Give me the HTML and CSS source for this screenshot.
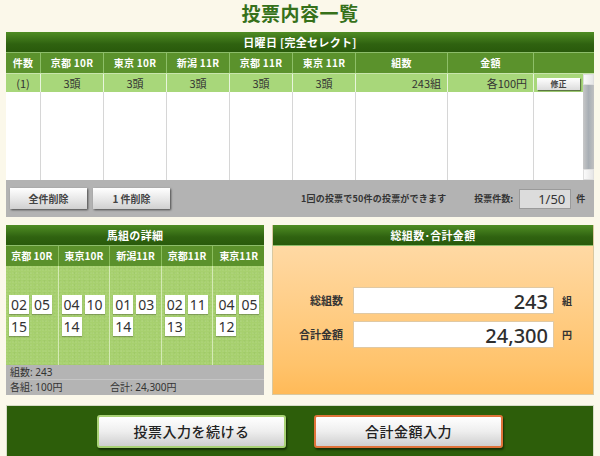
FILE: index.html
```html
<!DOCTYPE html>
<html lang="ja">
<head>
<meta charset="utf-8">
<title>投票内容一覧</title>
<link rel="stylesheet" href="styles.css">
</head>
<body>
<div class="page">
  <h1 class="title">投票内容一覧</h1>

  <section class="list-panel">
    <div class="bar-head">日曜日 [完全セレクト]</div>
    <div class="grid colhead">
      <div>件数</div><div>京都 10R</div><div>東京 10R</div><div>新潟 11R</div><div>京都 11R</div><div>東京 11R</div><div>組数</div><div>金額</div><div></div>
    </div>
    <div class="list-body">
      <div class="grid datarow">
        <div class="c">(1)</div><div class="c">3頭</div><div class="c">3頭</div><div class="c">3頭</div><div class="c">3頭</div><div class="c">3頭</div><div class="r">243組</div><div class="r">各100円</div><div class="l"><span class="btn-small">修正</span></div>
      </div>
      <div class="grid emptyrow">
        <div></div><div></div><div></div><div></div><div></div><div></div><div></div><div></div><div></div>
      </div>
      <div class="scrollbar"><div class="sb-end"></div><div class="sb-thumb"></div><div class="sb-end"></div></div>
    </div>
    <div class="toolbar">
      <span class="btn">全件削除</span>
      <span class="btn">1 件削除</span>
      <span class="note">1回の投票で50件の投票ができます</span>
      <span class="count-label">投票件数:</span>
      <span class="count-box">1/50</span>
      <span class="count-unit">件</span>
    </div>
  </section>

  <div class="row2">
    <section class="detail">
      <div class="bar-head">馬組の詳細</div>
      <div class="dgrid dhead">
        <div>京都 10R</div><div>東京10R</div><div>新潟11R</div><div>京都11R</div><div>東京11R</div>
      </div>
      <div class="dgrid turf">
        <div class="dcol"><span class="chip">02</span><span class="chip">05</span><span class="chip">15</span></div>
        <div class="dcol"><span class="chip">04</span><span class="chip">10</span><span class="chip">14</span></div>
        <div class="dcol"><span class="chip">01</span><span class="chip">03</span><span class="chip">14</span></div>
        <div class="dcol"><span class="chip">02</span><span class="chip">11</span><span class="chip">13</span></div>
        <div class="dcol"><span class="chip">04</span><span class="chip">05</span><span class="chip">12</span></div>
      </div>
      <div class="dsum">
        <div class="sline">組数: 243</div>
        <div class="sline"><span class="s1">各組: 100円</span><span>合計: 24,300円</span></div>
      </div>
    </section>

    <section class="total">
      <div class="bar-head">総組数･合計金額</div>
      <div class="total-body">
        <div class="trow"><span class="tlabel">総組数</span><span class="tbox">243</span><span class="tunit">組</span></div>
        <div class="trow"><span class="tlabel">合計金額</span><span class="tbox">24,300</span><span class="tunit">円</span></div>
      </div>
    </section>
  </div>

  <section class="actions">
    <span class="bigbtn green">投票入力を続ける</span>
    <span class="bigbtn orange">合計金額入力</span>
  </section>
</div>
</body>
</html>
```

FILE: styles.css
```css
* { box-sizing: border-box; margin: 0; padding: 0; }
html, body { background: #fbf8ea; }
body {
  font-family: "Noto Sans", "Noto Sans CJK JP", sans-serif;
  color: #333;
  overflow: hidden;
  width: 600px;
  height: 456px;
}
.page { padding: 0 6px; }

.title {
  height: 32px;
  line-height: 25px;
  text-align: center;
  font-family: "Noto Sans CJK JP", sans-serif;
  font-size: 19px;
  font-weight: 700;
  color: #36711a;
  letter-spacing: 0.5px;
}

.bar-head {
  height: 21px;
  line-height: 20px;
  text-align: center;
  color: #fff;
  font-family: "Noto Sans CJK JP", sans-serif;
  font-size: 11px;
  font-weight: 700;
  letter-spacing: 0.3px;
  background: linear-gradient(#4f8d24, #2f6210 60%, #295a0b);
  border-bottom: 1px solid #8dbd6a;
}

/* list panel */
.list-panel { background: #fff; }
.grid {
  display: grid;
  grid-template-columns: 34px 63px 63px 63px 63px 63px 92px 86px 61px;
}
.colhead {
  height: 21px;
  background: #5b922c;
  border-bottom: 1px solid #c8e5ac;
}
.colhead > div {
  color: #fff;
  font-family: "Noto Sans CJK JP", sans-serif;
  font-size: 10px;
  font-weight: 700;
  text-align: center;
  line-height: 20px;
  letter-spacing: 0.3px;
  border-left: 1px solid #8ebf68;
}
.colhead > div:first-child { border-left: none; }

.list-body { position: relative; }
.datarow {
  height: 18px;
  background: #a8d77a;
}
.datarow > div {
  font-family: "Noto Sans CJK JP", sans-serif;
  font-size: 11px;
  line-height: 18px;
  color: #333;
  border-left: 1px solid #e8f5dc;
  padding: 0 6px;
}
.datarow > div:first-child { border-left: none; }
.datarow .c { text-align: center; }
.datarow .r { text-align: right; }
.datarow .l { padding: 2px 0 0 3px; line-height: 12px; }
.btn-small {
  display: inline-block;
  width: 43px;
  height: 12px;
  line-height: 12px;
  text-align: center;
  font-size: 8px;
  font-weight: 700;
  color: #444;
  background: linear-gradient(#ffffff, #dcdcdc);
  box-shadow: 1px 1px 1px rgba(0,0,0,.45);
}
.emptyrow { height: 88px; }
.emptyrow > div { border-left: 1px solid #d6d6d6; }
.emptyrow > div:first-child { border-left: none; }

.scrollbar {
  position: absolute;
  right: 0;
  top: 0;
  width: 11px;
  height: 106px;
  display: flex;
  flex-direction: column;
}
.sb-end { height: 11px; background: linear-gradient(90deg, #fafafa, #e6e6e6); border: 1px solid #dedede; }
.sb-thumb { flex: 1; background: linear-gradient(90deg, #c8c8c8, #a8aeb4 50%, #c0c0c0); }

.toolbar {
  height: 37px;
  background: #b3b3b3;
  display: flex;
  align-items: center;
  padding: 0 0 0 4px;
}
.btn {
  display: inline-block;
  height: 21px;
  line-height: 21px;
  width: 77px;
  text-align: center;
  font-family: "Noto Sans CJK JP", sans-serif;
  font-size: 10px;
  font-weight: 700;
  color: #444;
  background: linear-gradient(#ffffff, #e4e4e4 60%, #d0d0d0);
  box-shadow: 1px 1px 2px rgba(0,0,0,.6);
  margin-right: 6px;
}
.note {
  margin-left: 125px;
  font-family: "Noto Sans CJK JP", sans-serif;
  font-size: 9px;
  font-weight: 700;
  color: #333;
  letter-spacing: 0.2px;
}
.count-label {
  margin-left: 28px;
  font-family: "Noto Sans CJK JP", sans-serif;
  font-size: 9px;
  font-weight: 700;
  color: #333;
}
.count-box {
  margin-left: 6px;
  width: 52px;
  height: 20px;
  line-height: 19px;
  text-align: right;
  padding-right: 5px;
  background: #dcdcdc;
  border: 1px solid #9a9a9a;
  font-size: 13px;
  color: #333;
}
.count-unit {
  margin-left: 5px;
  font-family: "Noto Sans CJK JP", sans-serif;
  font-size: 9px;
  font-weight: 700;
}

/* second row */
.row2 {
  display: flex;
  gap: 8px;
  margin-top: 8px;
  height: 170px;
}
.detail { width: 258px; display: flex; flex-direction: column; }
.dgrid { display: grid; grid-template-columns: repeat(5, 1fr); }
.dhead { height: 20px; background: #5b912b; }
.dhead > div {
  color: #fff;
  font-family: "Noto Sans CJK JP", sans-serif;
  font-size: 10px;
  font-weight: 700;
  line-height: 20px;
  text-align: center;
  border-left: 1px solid #8bbd5e;
}
.dhead > div:first-child { border-left: none; }
.turf {
  height: 100px;
  background-color: #a7d06e;
  background-image:
    radial-gradient(circle at 30% 40%, rgba(255,255,255,.06) 0.8px, transparent 1.3px),
    radial-gradient(circle at 70% 70%, rgba(70,120,30,.07) 0.8px, transparent 1.3px),
    radial-gradient(circle at 50% 20%, rgba(255,255,255,.05) 0.7px, transparent 1.2px);
  background-size: 3px 3px, 5px 4px, 7px 6px;
}
.dcol {
  border-left: 1px solid #d4eab4;
  display: flex;
  flex-wrap: wrap;
  align-content: center;
  gap: 3px 3px;
  padding: 0 0 0 3px;
}
.dcol:first-child { border-left: none; }
.chip {
  display: inline-block;
  width: 20px;
  height: 19px;
  line-height: 19px;
  text-align: center;
  background: #fff;
  font-size: 14px;
  color: #333;
  box-shadow: 0 1px 1px rgba(0,0,0,.25);
}
.dsum {
  height: 30px;
  background: #b4b4b4;
  padding: 0 0 0 4px;
}
.sline {
  height: 15px;
  line-height: 15px;
  font-family: "Noto Sans", "Noto Sans CJK JP", sans-serif;
  font-size: 10px;
  color: #333;
}
.sline:first-child { border-bottom: 1px solid #c6c6c6; }
.s1 { display: inline-block; width: 100px; }

.total {
  width: 322px;
  display: flex;
  flex-direction: column;
  border: 1px solid #d9c8a0;
  border-top: none;
}
.total-body {
  flex: 1;
  background: linear-gradient(#ffd9a4, #ffc36c 80%, #ffba58);
  display: flex;
  flex-direction: column;
  justify-content: center;
  gap: 7px;
  padding-bottom: 6px;
}
.trow { display: flex; align-items: center; }
.tlabel {
  width: 70px;
  text-align: right;
  font-family: "Noto Sans CJK JP", sans-serif;
  font-size: 11px;
  font-weight: 700;
  color: #333;
}
.tbox {
  margin-left: 10px;
  width: 201px;
  height: 27px;
  line-height: 27px;
  background: #fff;
  border: 1px solid #e0c9a4;
  text-align: right;
  padding-right: 5px;
  font-size: 20px;
  font-weight: 500;
  color: #2e2e2e;
}
.tunit {
  margin-left: 8px;
  font-family: "Noto Sans CJK JP", sans-serif;
  font-size: 10px;
  font-weight: 700;
}

/* actions */
.actions {
  margin-top: 10px;
  height: 56px;
  background: #2d5e0a;
  border: 1px solid #d6dcc6;
  display: flex;
  justify-content: center;
  gap: 28px;
  padding-top: 9px;
}
.bigbtn {
  display: inline-block;
  width: 189px;
  height: 33px;
  line-height: 29px;
  text-align: center;
  font-family: "Noto Sans CJK JP", sans-serif;
  font-size: 14px;
  font-weight: 500;
  color: #222;
  letter-spacing: 0.5px;
  border-radius: 3px;
  background: linear-gradient(#ffffff, #eeeeee 50%, #cfcfcf);
  box-shadow: 1px 2px 2px rgba(0,0,0,.5);
}
.bigbtn.green { border: 2px solid #a9d275; }
.bigbtn.orange { border: 2px solid #e0733a; }
```
